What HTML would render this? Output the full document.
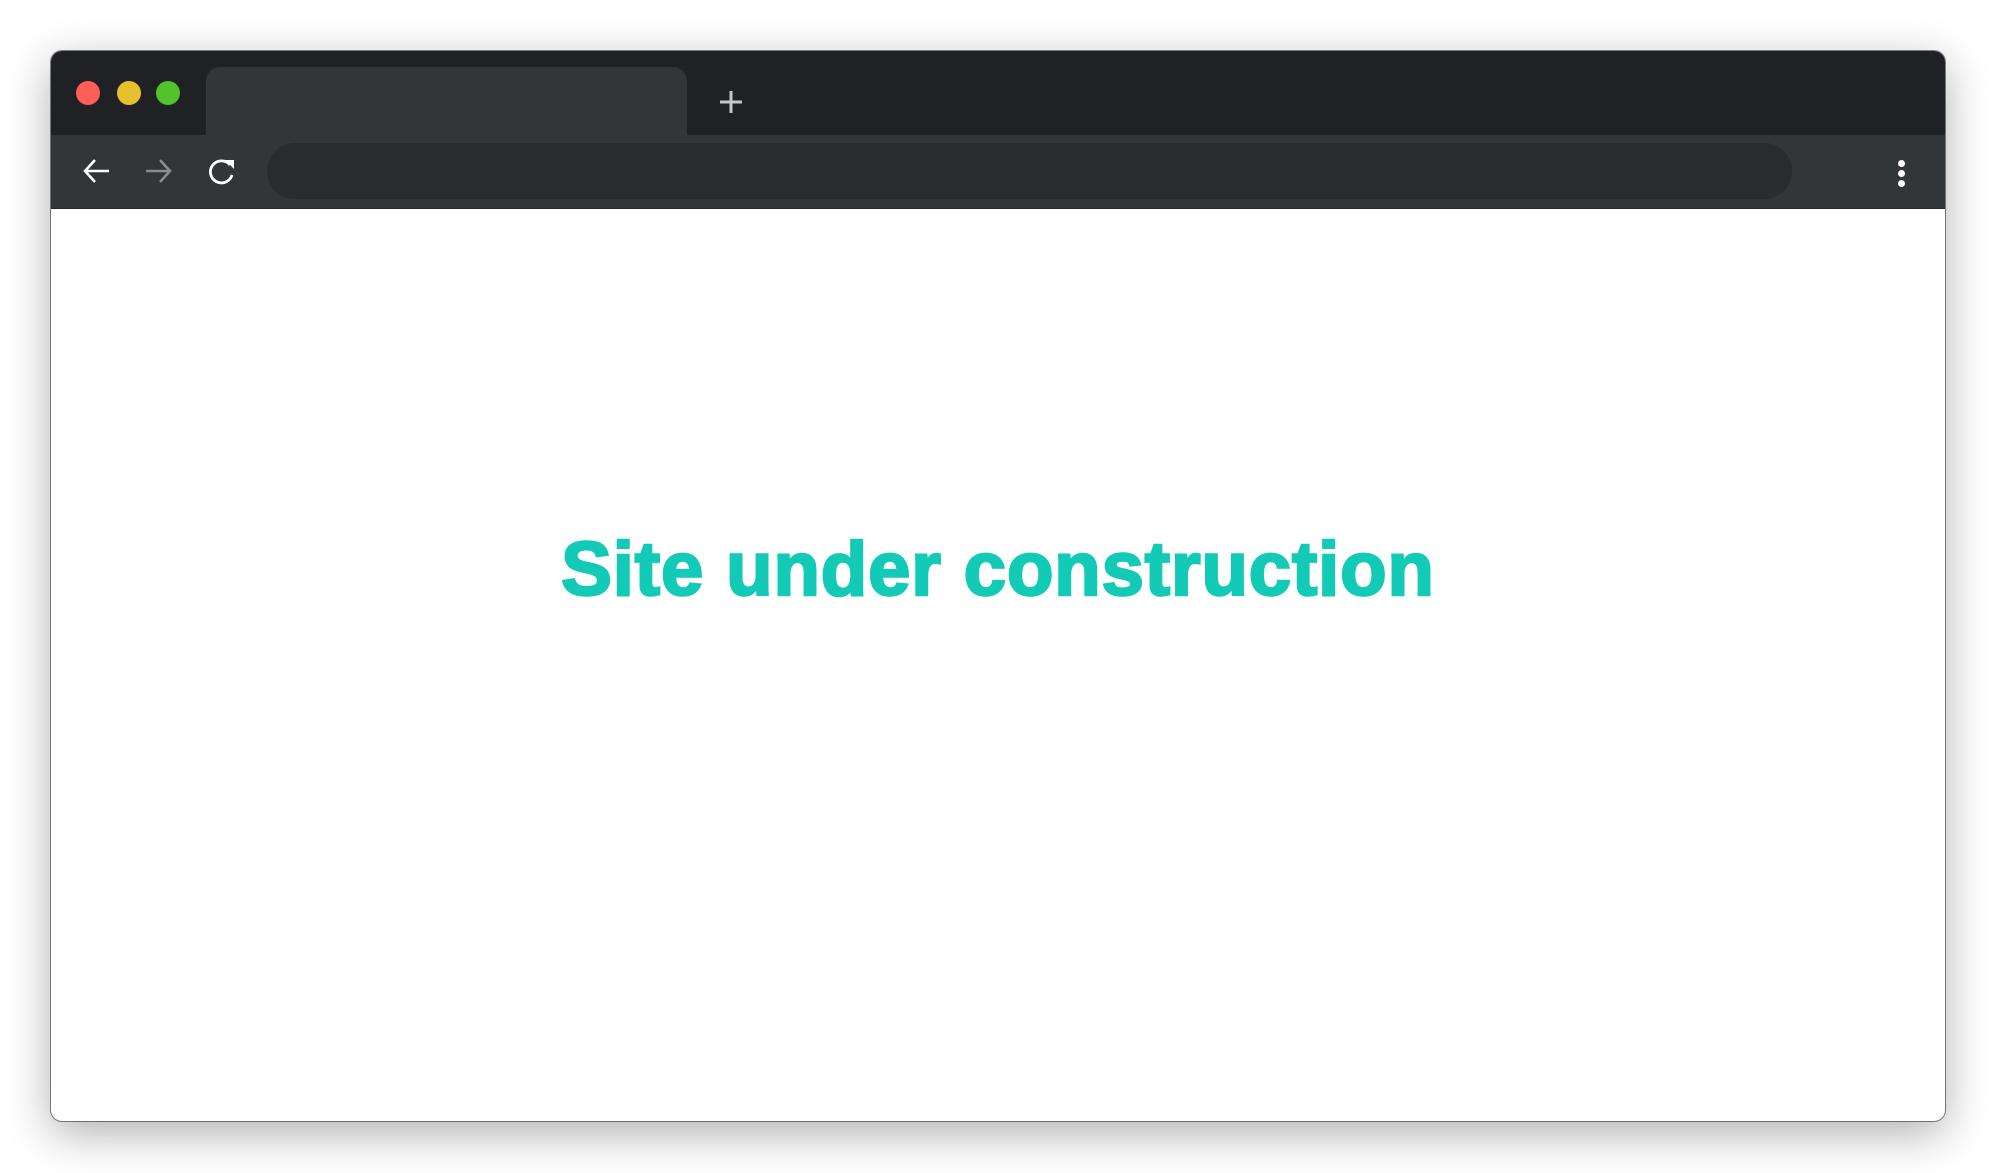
<!DOCTYPE html>
<html><head><meta charset="utf-8"><style>
html,body{margin:0;padding:0;width:1996px;height:1173px;background:#fff;overflow:hidden;font-family:"Liberation Sans",sans-serif}
.win{position:absolute;left:51px;top:51px;width:1894px;height:1070px;border-radius:11px;background:#fff;box-shadow:0 12px 45px rgba(0,0,0,.32),0 0 0 1px #8a8a8a;overflow:hidden}
.tabbar{position:absolute;left:0;top:0;width:100%;height:84px;background:#202124}
.tool{position:absolute;left:0;top:84px;width:100%;height:73px;background:#323639;border-bottom:1px solid #2a2a2a}
.dot{position:absolute;top:30px;width:24px;height:24px;border-radius:50%}
.tab{position:absolute;left:155px;top:16px;width:481px;height:70px;background:#323639;border-radius:14px 14px 0 0}
.addr{position:absolute;left:216px;top:92px;width:1525px;height:56px;border-radius:28px;background:#292c2f}
h1{position:absolute;left:0;top:531px;width:1996px;margin:0;text-align:center;font-size:76px;line-height:78px;font-weight:bold;color:#12cab6;letter-spacing:0.9px;-webkit-text-stroke:2.5px #12cab6}
</style></head><body>
<div class="win">
<div class="tabbar"></div>
<div class="tab"></div>
<div class="dot" style="left:25px;background:#ff5f57"></div>
<div class="dot" style="left:66px;background:#e6c02a"></div>
<div class="dot" style="left:105px;background:#53c22b"></div>
<svg style="position:absolute;left:667px;top:38px" width="26" height="26" viewBox="0 0 26 26"><path d="M13 2v22M2 13h22" stroke="#c4c7ca" stroke-width="3"/></svg>
<div class="tool"></div>
<div class="addr"></div>
<svg style="position:absolute;left:30px;top:107px" width="30" height="26" viewBox="0 0 30 26"><path d="M28 13H4M14 2L4 13l10 11" stroke="#fff" stroke-width="2.6" fill="none"/></svg>
<svg style="position:absolute;left:93px;top:107px" width="30" height="26" viewBox="0 0 30 26"><path d="M2 13h24M16 2l10 11-10 11" stroke="#8a8c8e" stroke-width="2.6" fill="none"/></svg>
<svg style="position:absolute;left:157px;top:106px" width="30" height="28" viewBox="0 0 30 28"><path d="M22 8A11 11 0 1 0 24 18" stroke="#fff" stroke-width="2.8" fill="none"/><path d="M17 3h9v9z" fill="#fff"/></svg>
<div style="position:absolute;left:1847px;top:109px;width:7px;height:7px;border-radius:50%;background:#fff"></div>
<div style="position:absolute;left:1847px;top:119px;width:7px;height:7px;border-radius:50%;background:#fff"></div>
<div style="position:absolute;left:1847px;top:129px;width:7px;height:7px;border-radius:50%;background:#fff"></div>
</div>
<h1>Site under construction</h1>
</body></html>
